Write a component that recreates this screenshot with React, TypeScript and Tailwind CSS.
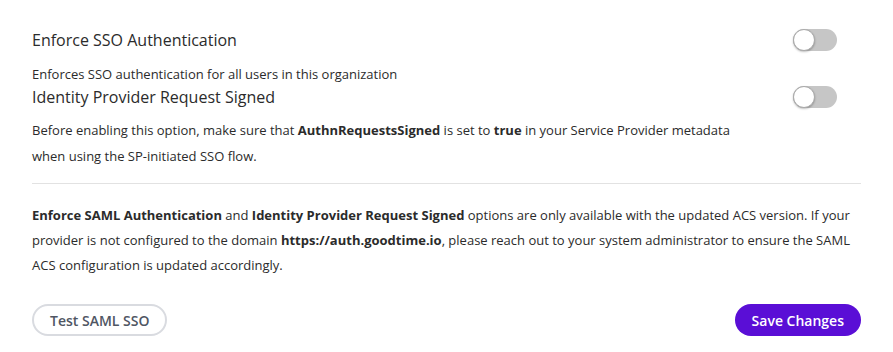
import React from "react";

function Toggle() {
  return (
    <div className="relative w-[44px] h-[22px] rounded-full bg-[#c6c6c6] shrink-0">
      <div className="absolute left-0 top-0 w-[22px] h-[22px] rounded-full bg-white border border-[#a9a9a9] shadow-[0_1px_2px_rgba(0,0,0,0.25)]" />
    </div>
  );
}

export default function App() {
  return (
    <div className="w-[893px] h-[352px] bg-white text-[#2b2b2b] font-['Open_Sans',sans-serif]">
      <div className="pl-[32px] pr-[32px] pt-[28px]">
        <div className="flex items-center justify-between pr-[24px]">
          <span className="text-[16px] leading-[24px]">Enforce SSO Authentication</span>
          <Toggle />
        </div>
        <p className="text-[13px] leading-[20px] mt-[12px]">Enforces SSO authentication for all users in this organization</p>
        <div className="flex items-center justify-between pr-[24px] mt-[1px]">
          <span className="text-[16px] leading-[24px]">Identity Provider Request Signed</span>
          <Toggle />
        </div>
        <p className="text-[13px] leading-[26px] mt-[8px] pb-[14px]">
          Before enabling this option, make sure that <b>AuthnRequestsSigned</b> is set to <b>true</b> in your Service Provider metadata
          <br />
          when using the SP-initiated SSO flow.
        </p>
        <div className="border-t border-[#e2e2e2]" />
        <p className="text-[13px] leading-[25px] mt-[19px]">
          <b>Enforce SAML Authentication</b> and <b>Identity Provider Request Signed</b> options are only available with the updated ACS version. If your provider is not configured to the domain <b>https://auth.goodtime.io</b>, please reach out to your system administrator to ensure the SAML ACS configuration is updated accordingly.
        </p>
        <div className="flex items-center justify-between mt-[26px]">
          <button className="h-[32px] px-[16px] rounded-full border-2 border-[#d9dbe0] text-[#4f5663] text-[14px] font-semibold">Test SAML SSO</button>
          <button className="h-[32px] px-[17px] rounded-full bg-[#5a0ed6] text-white text-[14px] font-semibold">Save Changes</button>
        </div>
      </div>
    </div>
  );
}
